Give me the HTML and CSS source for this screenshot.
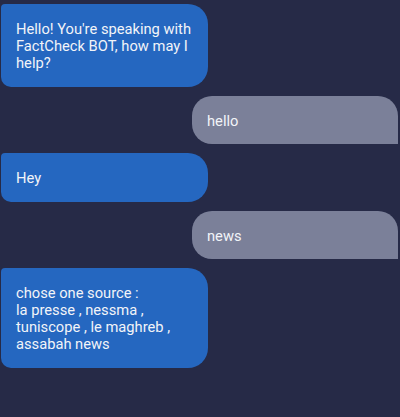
FILE: index.html
```html
<!DOCTYPE html>
<html>
<head>
<meta charset="utf-8">
<link rel="stylesheet" href="styles.css">
</head>
<body>
<div class="chat">
  <div class="msg bot">Hello! You're speaking with FactCheck BOT, how may I help?</div>
  <div class="msg user">hello</div>
  <div class="msg bot">Hey</div>
  <div class="msg user">news</div>
  <div class="msg bot">chose one source :<br>la presse , nessma ,<br>tuniscope , le maghreb ,<br>assabah news</div>
</div>
</body>
</html>
```

FILE: styles.css
```css
html, body {
  margin: 0;
  padding: 0;
  background: #262a47;
  height: 100%;
}
body {
  font-family: Roboto, "Liberation Sans", sans-serif;
  font-size: 14.7px;
  color: #f2f4f8;
}
.chat {
  display: flex;
  flex-direction: column;
  gap: 9px;
  padding: 4px 2px 0 1px;
}
.msg {
  line-height: 17px;
  box-sizing: border-box;
}
.bot {
  align-self: flex-start;
  width: 207px;
  background: #2567c0;
  padding: 17px 10px 15px 15px;
  border-radius: 4px 20px 20px 10px;
}
.user {
  align-self: flex-end;
  width: 206px;
  background: #7b8099;
  padding: 17px 12px 14px 15px;
  border-radius: 20px 20px 0 20px;
}
```
